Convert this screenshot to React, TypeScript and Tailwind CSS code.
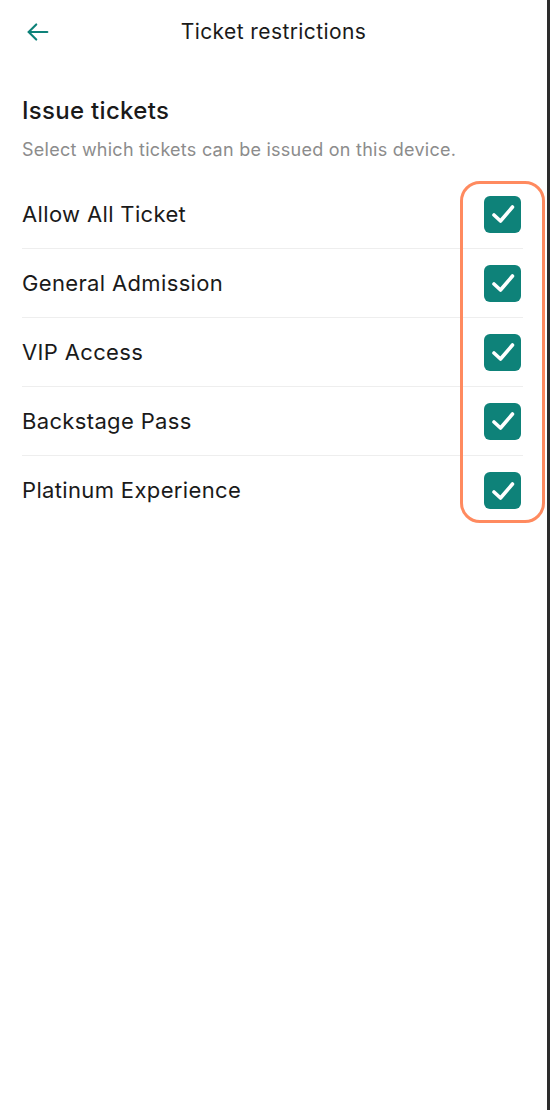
import React, { useState } from 'react';

const tickets = ['Allow All Ticket', 'General Admission', 'VIP Access', 'Backstage Pass', 'Platinum Experience'];

const CheckBox = ({ checked, onClick }: { checked: boolean; onClick: () => void }) => (
  <button
    onClick={onClick}
    className={`w-[37px] h-[37px] rounded-[6px] flex items-center justify-center ${checked ? 'bg-[#0e8279]' : 'border-2 border-[#9ca3af] bg-white'}`}
  >
    {checked && (
      <svg width="26" height="26" viewBox="0 0 26 26" fill="none">
        <path d="M4 14 L10.5 20 L22.5 6" stroke="white" strokeWidth="3.6" strokeLinecap="round" strokeLinejoin="round" />
      </svg>
    )}
  </button>
);

const App: React.FC = () => {
  const [selected, setSelected] = useState<boolean[]>(tickets.map(() => true));

  const toggle = (i: number) => {
    setSelected(prev => prev.map((v, idx) => (idx === i ? !v : v)));
  };

  return (
    <div className="flex w-[550px] h-[1110px] bg-white" style={{ fontFamily: 'Inter, "Noto Sans", sans-serif' }}>
      <div className="flex-1 flex flex-col relative">
        {/* Header */}
        <div className="h-16 flex items-center relative">
          <button className="ml-[24px] w-[28px] h-[28px] flex items-center justify-center text-[#0e8279]">
            <svg width="28" height="28" viewBox="0 0 24 24" fill="none" stroke="currentColor" strokeWidth="1.8" strokeLinecap="round" strokeLinejoin="round">
              <path d="M20 12H4" />
              <path d="M10.5 5.5L4 12l6.5 6.5" />
            </svg>
          </button>
          <h1 className="absolute left-0 right-0 text-center text-[21px] text-[#1a1a1a] pointer-events-none tracking-[0.4px]">
            Ticket restrictions
          </h1>
        </div>

        {/* Section */}
        <div className="px-[22px] pt-[31px]">
          <h2 className="text-[24px] leading-[32px] font-medium text-[#1a1a1a] tracking-[0.3px]">Issue tickets</h2>
          <p className="mt-[11px] text-[18px] leading-[24px] text-[#8c8c8c] tracking-[0.25px]">Select which tickets can be issued on this device.</p>
        </div>

        <div className="ml-[22px] mr-[24px] mt-[18px] flex flex-col">
          {tickets.map((t, i) => (
            <div
              key={t}
              className={`h-[69px] flex items-center justify-between ${i < tickets.length - 1 ? 'border-b border-[#eeeeee]' : ''}`}
            >
              <span className="text-[22px] text-[#1a1a1a] tracking-[0.35px]">{t}</span>
              <div className="mr-[2px]">
                <CheckBox checked={selected[i]} onClick={() => toggle(i)} />
              </div>
            </div>
          ))}
        </div>

        {/* Highlight annotation */}
        <div className="absolute left-[460px] top-[181px] w-[85px] h-[342px] border-[3px] border-[#ff8a5f] rounded-[20px] pointer-events-none" />
      </div>
      <div className="w-[3px] bg-[#2c2c2c]" />
    </div>
  );
};

export default App;
